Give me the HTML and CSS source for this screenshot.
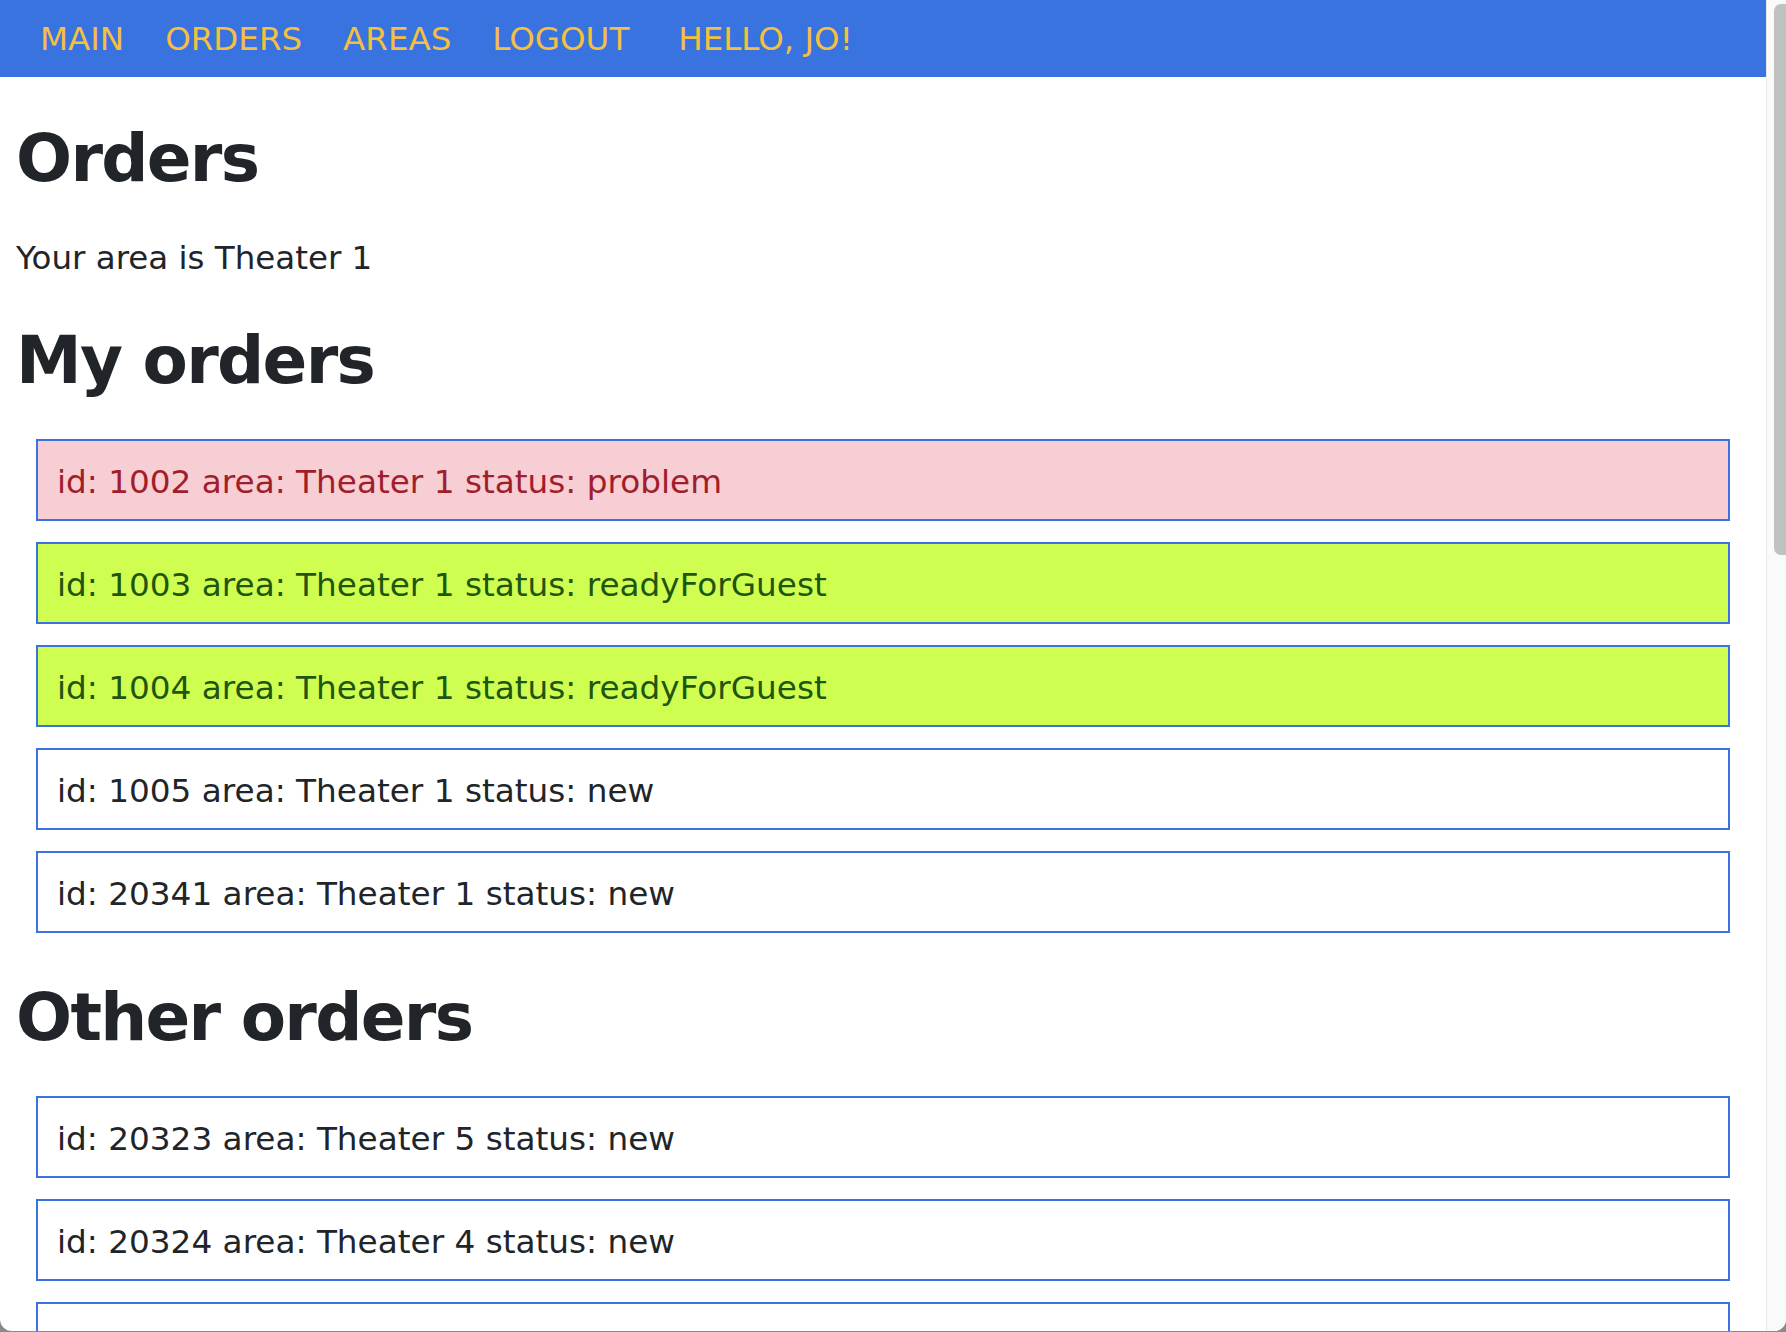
FILE: index.html
```html
<!DOCTYPE html>
<html lang="en">
<head>
<meta charset="utf-8">
<title>Orders</title>
<link rel="stylesheet" href="styles.css">
</head>
<body>
<div class="window">
  <div class="page">
    <nav class="navbar">
      <a class="nav-link" href="#">MAIN</a>
      <a class="nav-link" href="#">ORDERS</a>
      <a class="nav-link" href="#">AREAS</a>
      <a class="nav-link" href="#">LOGOUT</a>
      <span class="nav-hello">HELLO, JO!</span>
    </nav>
    <main class="content">
      <h1 class="heading heading-first">Orders</h1>
      <p class="area">Your area is Theater 1</p>
      <h1 class="heading">My orders</h1>
      <ul class="order-list">
        <li class="order order-problem">id: 1002 area: Theater 1 status: problem</li>
        <li class="order order-ready">id: 1003 area: Theater 1 status: readyForGuest</li>
        <li class="order order-ready">id: 1004 area: Theater 1 status: readyForGuest</li>
        <li class="order">id: 1005 area: Theater 1 status: new</li>
        <li class="order">id: 20341 area: Theater 1 status: new</li>
      </ul>
      <h1 class="heading">Other orders</h1>
      <ul class="order-list">
        <li class="order">id: 20323 area: Theater 5 status: new</li>
        <li class="order">id: 20324 area: Theater 4 status: new</li>
        <li class="order">&nbsp;</li>
      </ul>
    </main>
  </div>
  <div class="scrollbar">
    <div class="scroll-thumb"></div>
  </div>
</div>
</body>
</html>
```

FILE: styles.css
```css
html, body {
  margin: 0;
  padding: 0;
  height: 1332px;
  overflow: hidden;
  background: #8a8a8a;
}

body {
  font-family: "DejaVu Sans", Verdana, sans-serif;
  color: #212529;
}

.window {
  height: 1331px;
  display: flex;
  background: #ffffff;
  border-radius: 0 0 12px 12px;
  overflow: hidden;
}

.page {
  flex: 1;
  min-width: 0;
  overflow: hidden;
}

.navbar {
  display: flex;
  align-items: center;
  height: 77px;
  box-sizing: border-box;
  padding: 1px 0 0 40px;
  background: #3873df;
  gap: 41px;
}

.nav-link,
.nav-hello {
  font-size: 32.5px;
  line-height: 48px;
  color: #f5bf42;
  text-decoration: none;
}

.nav-hello {
  margin-left: 8px;
}

.content {
  padding: 42px 16px 0 16px;
}

.heading {
  margin: 0 0 39px 0;
  font-size: 66px;
  line-height: 79px;
  font-weight: bold;
  letter-spacing: -1.7px;
  color: #212529;
}

.heading-first {
  margin-bottom: 36px;
}

.area {
  margin: 0 0 39px 0;
  font-size: 32.5px;
  line-height: 48px;
}

.order-list {
  list-style: none;
  margin: 0 20px 45px 20px;
  padding: 0;
}

.order {
  border: 2px solid #3873df;
  padding: 17px 20px 13px 19px;
  font-size: 32.7px;
  line-height: 48px;
  color: #212529;
  background: #ffffff;
  margin-bottom: 21px;
}

.order-problem {
  background: #f6ced3;
  color: #a21d2b;
}

.order-ready {
  background: #d0fe50;
  color: #1f560f;
}

.scrollbar {
  width: 20px;
  flex: none;
  background: #fafafa;
  border-left: 1px solid #e6e6e6;
  box-sizing: border-box;
  padding: 4px 0 0 7px;
}

.scroll-thumb {
  height: 551px;
  background: #c1c1c1;
  border-radius: 7px 0 0 7px;
}
```
